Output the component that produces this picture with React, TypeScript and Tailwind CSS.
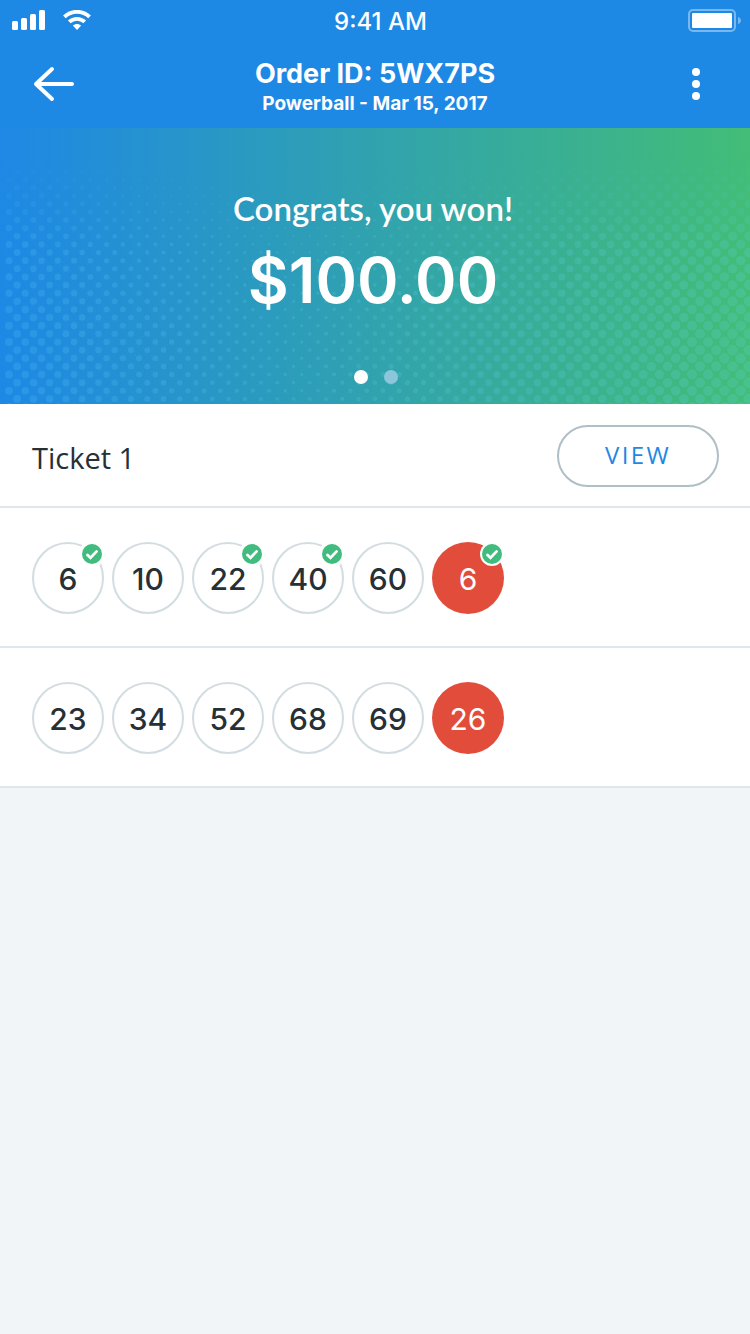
type Ball = { value: number; matched?: boolean; power?: boolean };

const PLAYS: Ball[][] = [
  [
    { value: 6, matched: true },
    { value: 10 },
    { value: 22, matched: true },
    { value: 40, matched: true },
    { value: 60 },
    { value: 6, matched: true, power: true },
  ],
  [
    { value: 23 },
    { value: 34 },
    { value: 52 },
    { value: 68 },
    { value: 69 },
    { value: 26, power: true },
  ],
];

/* Halftone field: staggered dots that grow towards both sides and fade out at the top. */
const PITCH = 16.26;
const DOTS = Array.from({ length: 32 }, (_, row) => {
  const cy = 27 + row * 8.13;
  const offset = row % 2 === 0 ? 17.13 : 9;
  return Array.from({ length: 46 }, (_, col) => {
    const cx = offset + col * PITCH;
    const side = cx < 300 ? ((300 - cx) / 300) * 2.2 : ((cx - 300) / 450) * 3.6;
    const depth = Math.min(1, row / 22);
    const middle = 1 - Math.min(1, Math.abs(cx - 300) / 300);
    const r = (1.8 + side) * (1 - (1 - depth) * (0.25 + 0.5 * middle));
    const opacity = 0.17 * Math.min(1, (row + 0.3) / 12);
    return { cx, cy, r, opacity };
  });
}).flat();

function Halftone() {
  return (
    <svg
      className="absolute inset-0 h-full w-full"
      viewBox="0 0 750 276"
      preserveAspectRatio="none"
      aria-hidden="true"
    >
      {DOTS.map((d, i) => (
        <circle key={i} cx={d.cx} cy={d.cy} r={d.r} fill="#64dcff" fillOpacity={d.opacity} />
      ))}
    </svg>
  );
}

function StatusBar() {
  return (
    <div className="grid h-10 grid-cols-3 items-center pr-[9px] pl-3">
      <div className="flex items-center gap-[18px]">
        <svg width="33" height="20" viewBox="0 0 33 20" fill="#fff" role="img" aria-label="Signal">
          <rect x="0" y="11" width="6" height="9" rx="1.5" />
          <rect x="9" y="8" width="6" height="12" rx="1.5" />
          <rect x="18" y="4" width="6" height="16" rx="1.5" />
          <rect x="27" y="0" width="6" height="20" rx="1.5" />
        </svg>
        <svg width="28" height="20" viewBox="0 0 28 20" role="img" aria-label="Wi-Fi">
          <path d="M1.4 6.900C8.400 0.100 19.600 0.100 26.600 6.900" fill="none" stroke="#fff" strokeWidth="3.9" />
          <path d="M6.300 11.900C10.600 7.800 17.400 7.800 21.700 11.900" fill="none" stroke="#fff" strokeWidth="3.9" />
          <path d="M9.800 15.600C12.200 13.300 15.800 13.300 18.200 15.600L14 20Z" fill="#fff" />
        </svg>
      </div>
      <div className="pt-1 pl-2 text-center font-['Inter',sans-serif] text-[24px] leading-7 font-medium whitespace-nowrap">
        9:41 AM
      </div>
      <svg
        className="justify-self-end"
        width="53"
        height="24"
        viewBox="0 0 53 24"
        role="img"
        aria-label="Battery full"
      >
        <rect x="1" y="2" width="46" height="21" rx="4" fill="none" stroke="#78b8ef" strokeWidth="2" />
        <rect x="4" y="5" width="40" height="15" rx="1" fill="#fff" />
        <path d="M50 9C52 9.600 53 11 53 12.500S52 15.400 50 16Z" fill="#78b8ef" />
      </svg>
    </div>
  );
}

function Header() {
  return (
    <header className="bg-[#1e88e5] text-white">
      <StatusBar />
      <div className="flex h-[88px] items-center justify-between px-8">
        <button type="button" aria-label="Back" className="flex h-11 w-11 items-center">
          <svg width="44" height="36" viewBox="0 0 44 36" fill="none" stroke="#fff" strokeWidth="4" strokeLinecap="round" strokeLinejoin="round">
            <path d="M20 3L4 18L20 33M4.500 18H40" />
          </svg>
        </button>
        <div className="flex flex-col items-center pt-2 font-['Inter',sans-serif] font-bold">
          <h1 className="text-[27px] leading-8">Order ID: 5WX7PS</h1>
          <p className="text-[19px] leading-7">Powerball - Mar 15, 2017</p>
        </div>
        <button type="button" aria-label="More options" className="flex h-11 w-11 items-center justify-center">
          <svg width="8" height="32" viewBox="0 0 8 32" fill="#fff">
            <circle cx="4" cy="4" r="4" />
            <circle cx="4" cy="16" r="4" />
            <circle cx="4" cy="28" r="4" />
          </svg>
        </button>
      </div>
    </header>
  );
}

function WinBanner() {
  return (
    <section className="relative bg-linear-to-r/srgb from-[#1e88e5] to-[#43bd77]">
      <Halftone />
      <div className="relative flex flex-col items-center pt-[60px] pb-5 text-white">
        <p className="pr-1 font-['Lato',sans-serif] text-[33px] leading-10 font-semibold">Congrats, you won!</p>
        <p className="pr-1 font-['Inter',sans-serif] text-[63px] leading-[104px] font-semibold">$100.00</p>
        <div className="flex gap-4 pt-[38px] pl-0.5">
          <button type="button" aria-label="Slide 1" className="h-3.5 w-3.5 rounded-full bg-white" />
          <button type="button" aria-label="Slide 2" className="h-3.5 w-3.5 rounded-full bg-[#8cc6dd]" />
        </div>
      </div>
    </section>
  );
}

function MatchBadge({ ringed }: { ringed?: boolean }) {
  return (
    <svg className="absolute top-0 right-0" width="24" height="24" viewBox="0 0 24 24" role="img" aria-label="Matched">
      <circle cx="12" cy="12" r={ringed ? 12 : 13} fill="#fff" />
      <circle cx="12" cy="12" r="10" fill="#42bb7f" />
      <path d="M7.500 13L10.500 15.700L16.600 9.400" fill="none" stroke="#fff" strokeWidth="2.800" strokeLinecap="round" />
    </svg>
  );
}

function NumberBall({ ball }: { ball: Ball }) {
  const tone = ball.power
    ? "bg-[#e24c3b] text-white font-normal"
    : "border-2 border-[#d2dde1] text-[#263035] font-medium";
  return (
    <li className="relative">
      <div
        className={`flex h-18 w-18 items-center justify-center rounded-full pt-0.5 font-['Inter',sans-serif] text-[30px] leading-9 ${tone}`}
      >
        {ball.value}
      </div>
      {ball.matched && <MatchBadge ringed={ball.power} />}
    </li>
  );
}

export default function App() {
  return (
    <div className="min-h-screen bg-[#f1f5f8]">
      <Header />
      <main>
        <WinBanner />
        <section>
          <div className="flex items-center justify-between border-b-2 border-[#e0e7ea] bg-white pt-[21px] pr-[31px] pb-[19px] pl-8">
            <h2 className="pt-1 font-['Open_Sans',sans-serif] text-[29px] leading-10 text-[#263035]">Ticket 1</h2>
            <button
              type="button"
              className="h-[62px] w-[162px] rounded-full border-2 border-[#b0bec5] pb-0.5 font-['Open_Sans',sans-serif] text-[24px] leading-8 tracking-widest text-[#1e88e5]"
            >
              VIEW
            </button>
          </div>
          {PLAYS.map((play, i) => (
            <ul key={i} className="flex gap-2 border-b-2 border-[#e0e7ea] bg-white px-8 pt-[34px] pb-8">
              {play.map((ball, j) => (
                <NumberBall key={j} ball={ball} />
              ))}
            </ul>
          ))}
        </section>
      </main>
    </div>
  );
}
